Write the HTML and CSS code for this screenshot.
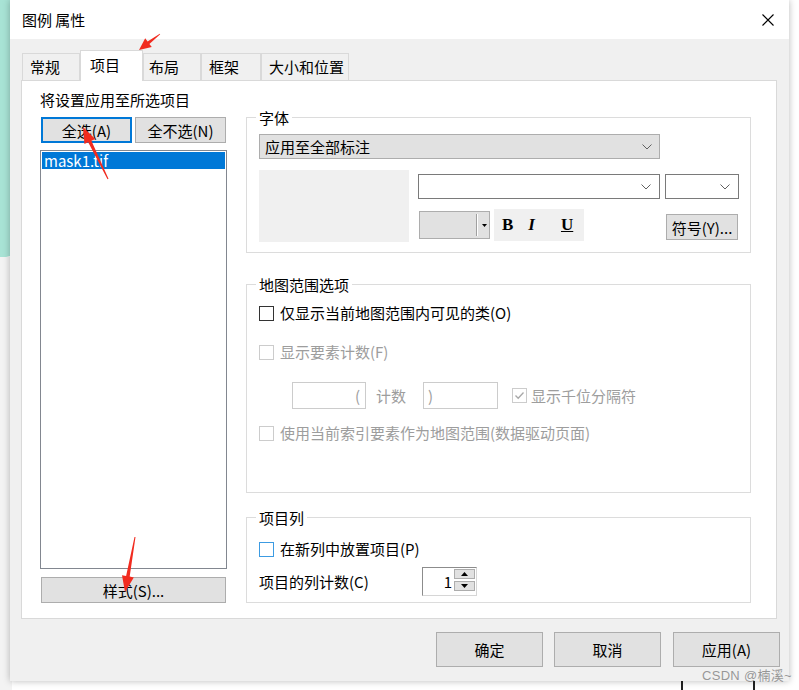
FILE: index.html
```html
<!DOCTYPE html>
<html lang="zh-CN">
<head>
<meta charset="utf-8">
<title>图例 属性</title>
<link rel="stylesheet" href="styles.css">
</head>
<body>
<div class="desk-teal"></div>
<div class="desk-gray"></div>
<div class="desk-line dl1 dl-top"></div>
<div class="desk-line dl2 dl-top"></div>
<div class="desk-line dl1 dl-bot"></div>
<div class="desk-line dl2 dl-bot"></div>

<div class="dialog">
  <div class="titlebar">
    <span class="title">图例 属性</span>
    <svg class="close" viewBox="0 0 12 12"><path d="M0.5 0.5L11.5 11.5M11.5 0.5L0.5 11.5" stroke="#000" stroke-width="1.1" fill="none"/></svg>
  </div>
  <div class="dbody">
    <div class="tabs">
      <div class="tab w58">常规</div>
      <div class="tab sel w63">项目</div>
      <div class="tab w58 p5">布局</div>
      <div class="tab w60">框架</div>
      <div class="tab w88">大小和位置</div>
    </div>
    <div class="panel">
      <div class="leftcol">
        <div class="lbl">将设置应用至所选项目</div>
        <div class="btnrow">
          <button class="btn def">全选(A)</button>
          <button class="btn half">全不选(N)</button>
        </div>
        <div class="list"><div class="item">mask1.tif</div></div>
        <button class="btn style">样式(S)...</button>
      </div>
      <div class="rightcol">
        <div class="group g1">
          <div class="legend">字体</div>
          <div class="dd">
            <span>应用至全部标注</span>
            <svg class="chev" viewBox="0 0 10 6"><polyline points="0.5,0.5 5,5 9.5,0.5" fill="none" stroke="#606060" stroke-width="1"/></svg>
          </div>
          <div class="fontrow">
            <div class="preview"></div>
            <div class="fontctl">
              <div class="ctlrow">
                <div class="combo fontname"><svg class="chev" viewBox="0 0 10 6"><polyline points="0.5,0.5 5,5 9.5,0.5" fill="none" stroke="#606060" stroke-width="1"/></svg></div>
                <div class="combo fontsize"><svg class="chev" viewBox="0 0 10 6"><polyline points="0.5,0.5 5,5 9.5,0.5" fill="none" stroke="#606060" stroke-width="1"/></svg></div>
              </div>
              <div class="ctlrow2">
                <div class="colorbox"><span class="sep"></span><svg class="tri" viewBox="0 0 5 3"><polygon points="0,0 5,0 2.5,3" fill="#000"/></svg></div>
                <div class="biu"><span class="b">B</span><span class="i">I</span><span class="u">U</span></div>
                <button class="btn sym">符号(Y)...</button>
              </div>
            </div>
          </div>
        </div>

        <div class="group g2">
          <div class="legend">地图范围选项</div>
          <div class="row r1"><span class="cb"></span><span class="cbtext">仅显示当前地图范围内可见的类(O)</span></div>
          <div class="row r2 dis"><span class="cb"></span><span class="cbtext">显示要素计数(F)</span></div>
          <div class="row r3 dis">
            <div class="tbox t1">(</div>
            <span class="cnt">计数</span>
            <div class="tbox t2">)</div>
            <span class="cb checked"><svg viewBox="0 0 13 13"><polyline points="2.5,6.5 5.2,9.3 10.5,3.5" fill="none" stroke="#a8a8a8" stroke-width="1.3"/></svg></span>
            <span class="cbtext">显示千位分隔符</span>
          </div>
          <div class="row r4 dis"><span class="cb"></span><span class="cbtext">使用当前索引要素作为地图范围(数据驱动页面)</span></div>
        </div>

        <div class="group g3">
          <div class="legend">项目列</div>
          <div class="row r5"><span class="cb blue"></span><span class="cbtext">在新列中放置项目(P)</span></div>
          <div class="row r6">
            <span class="collbl">项目的列计数(C)</span>
            <div class="spin">
              <div class="spinval">1</div>
              <div class="spinbtns">
                <div class="sbtn"><svg viewBox="0 0 7 4"><polygon points="0,4 7,4 3.5,0" fill="#000"/></svg></div>
                <div class="sbtn"><svg viewBox="0 0 7 4"><polygon points="0,0 7,0 3.5,4" fill="#000"/></svg></div>
              </div>
            </div>
          </div>
        </div>
      </div>
    </div>
    <div class="footer">
      <button class="btn fbtn">确定</button>
      <button class="btn fbtn">取消</button>
      <button class="btn fbtn last">应用(A)</button>
    </div>
  </div>
</div>

<svg class="arrows" viewBox="0 0 799 690">
  <polygon fill="#f12b1f" points="159.8,33.7 147.6,41.5 145.2,38.3 139,50 151.8,47.1 149.4,43.9 160.2,34.3"/>
  <polygon fill="#f12b1f" points="108.5,178.8 91.4,140.7 95.2,138.9 83,127 84.4,144.1 88.2,142.3 107.5,179.2"/>
  <polygon fill="#f12b1f" points="134.5,536.9 126.1,576.0 122.0,575.2 125,592 133.8,577.4 129.7,576.6 135.5,537.1"/>
</svg>
<div class="watermark">CSDN @楠溪~</div>
</body>
</html>
```
FILE: styles.css
```css
* { box-sizing: border-box; }
body {
  margin: 0;
  width: 799px;
  height: 690px;
  overflow: hidden;
  position: relative;
  background: #fff;
  font-family: "Noto Sans CJK SC", "Noto Sans", sans-serif;
  font-size: 15px;
  color: #000;
}
.desk-teal { position: absolute; left: 0; top: 0; width: 16px; height: 257px; background: #a8e3d5; border-bottom-right-radius: 10px; }
.desk-gray { position: absolute; left: 0; top: 257px; bottom: 0; width: 12px; background: #f3f3f3; }
.desk-line { position: absolute; width: 2px; background: #222; }
.dl1 { left: 681px; }
.dl2 { left: 753px; }
.dl-top { top: 0; height: 3px; }
.dl-bot { top: 681px; height: 9px; }

.dialog {
  position: absolute;
  left: 10px; top: 0;
  width: 779px; height: 681px;
  background: #f0f0f0;
  box-shadow: 0 0 7px rgba(0,0,0,0.28);
  display: flex; flex-direction: column;
}
.titlebar {
  height: 39px; flex: none;
  background: #fff;
  display: flex; align-items: center; justify-content: space-between;
  padding: 0 15px 0 12px;
}
.title { line-height: 20px; }
.close { width: 12px; height: 12px; display: block; }

.dbody { flex: 1; padding: 11px 12px 0 11px; display: flex; flex-direction: column; }
.tabs { display: flex; align-items: flex-end; height: 30px; padding-left: 1px; position: relative; z-index: 1; flex: none; }
.tab {
  height: 27px;
  border: 1px solid #d9d9d9; border-bottom: none;
  background: #f0f0f0;
  padding-left: 7px;
  line-height: 25px;
  white-space: nowrap;
}
.tab.sel { height: 31px; margin-bottom: -1px; background: #fff; padding-left: 9px; line-height: 27px; }
.tab.p5 { padding-left: 5px; }
.w58 { width: 58px; } .w60 { width: 60px; } .w63 { width: 63px; } .w88 { width: 88px; }

.panel {
  flex: none;
  height: 539px; width: 756px;
  background: #fff;
  border: 1px solid #d9d9d9;
  display: flex;
  padding: 9px 0 0 18px;
}
.leftcol { flex: 0 0 187px; width: 187px; display: flex; flex-direction: column; }
.lbl { line-height: 20px; height: 20px; white-space: nowrap; }
.btnrow { display: flex; gap: 3px; margin: 7px 0 0 1px; }

.btn {
  font: inherit; color: #000;
  background: #e1e1e1;
  border: 1px solid #adadad;
  padding: 0; margin: 0;
  display: flex; align-items: center; justify-content: center;
  white-space: nowrap;
}
.btn.def { width: 91px; height: 26px; border: 2px solid #0078d7; }
.btn.half { width: 91px; height: 26px; }
.list { margin-top: 7px; height: 419px; width: 187px; border: 1px solid #828790; padding: 1px; }
.item { height: 17px; line-height: 17px; background: #0078d7; color: #fff; padding-left: 2px; }
.btn.style { margin: 8px 0 0 1px; width: 185px; height: 26px; }

.rightcol { flex: 0 0 505px; width: 505px; max-width: 505px; margin-left: 19px; display: flex; flex-direction: column; align-items: stretch; }
.group { width: 505px; border: 1px solid #dcdcdc; padding-left: 12px; display: flex; flex-direction: column; align-items: flex-start; }
.legend { margin: -10px 0 0 -3px; padding: 0 3px; height: 20px; line-height: 20px; background: #fff; width: max-content; }
.g1 { margin-top: 27px; height: 136px; }
.dd {
  margin-top: 6px; width: 401px; height: 25px;
  background: #e1e1e1; border: 1px solid #adadad;
  display: flex; align-items: center; justify-content: space-between;
  padding: 0 7px 0 5px;
}
.chev { width: 10px; height: 6px; display: block; }
.fontrow { display: flex; margin-top: 11px; }
.preview { width: 150px; height: 72px; background: #f0f0f0; }
.fontctl { margin-left: 9px; width: 321px; display: flex; flex-direction: column; }
.ctlrow { display: flex; margin-top: 4px; }
.combo { height: 25px; border: 1px solid #7a7a7a; background: #fff; display: flex; align-items: center; justify-content: flex-end; padding-right: 8px; }
.fontname { width: 242px; }
.fontsize { width: 74px; margin-left: 5px; }
.ctlrow2 { display: flex; margin-top: 10px; align-items: flex-start; }
.colorbox {
  margin: 2px 0 0 1px; width: 71px; height: 28px;
  background: #e1e1e1; border: 1px solid #adadad;
  display: flex; align-items: center; justify-content: flex-end; padding-right: 2px;
}
.sep { width: 1px; height: 22px; background: #a0a0a0; box-shadow: 1px 0 0 #fff; margin-right: 5px; }
.tri { width: 5px; height: 3px; display: block; }
.biu {
  margin-left: 4px; width: 90px; height: 32px; background: #f0f0f0;
  display: flex; align-items: center;
  font-family: "Liberation Serif", serif; font-weight: bold; font-size: 17px;
}
.biu .b { margin-left: 8px; }
.biu .i { margin-left: 15px; font-style: italic; }
.biu .u { margin-left: 26px; text-decoration: underline; text-underline-offset: 1px; }
.btn.sym { margin: 5px 1px 0 auto; width: 72px; height: 26px; }

.g2 { margin-top: 31px; height: 209px; }
.row { display: flex; align-items: center; height: 20px; white-space: nowrap; }
.cb { width: 15px; height: 15px; border: 1px solid #333; background: #fff; flex: none; display: flex; }
.cb svg { width: 13px; height: 13px; display: block; }
.cbtext { margin-left: 6px; line-height: 20px; }
.dis { color: #9d9d9d; }
.dis .cb { border-color: #cccccc; }
.r1 { margin-top: 8px; }
.r2 { margin-top: 19px; }
.r3 { margin-top: 20px; height: 27px; }
.r4 { margin-top: 14px; }
.tbox { width: 74px; height: 27px; border: 1px solid #cccccc; display: flex; align-items: center; line-height: 20px; }
.t1 { margin-left: 33px; justify-content: flex-end; padding-right: 5px; }
.t2 { width: 75px; padding-left: 4px; }
.cnt { margin: 0 17px 0 10px; }
.r3 .cb { margin-left: 14px; }
.r3 .cbtext { margin-left: 4px; }

.g3 { margin-top: 24px; height: 86px; }
.blue { border-color: #3c9be2; }
.r5 { margin-top: 11px; }
.r6 { margin-top: 8px; height: 29px; }
.collbl { width: 163px; }
.spin {
  width: 55px; height: 29px;
  border: 1px solid; border-color: #8c8c8c #d6d6d6 #d6d6d6 #8c8c8c;
  display: flex;
}
.spinval { flex: 1; text-align: right; padding-right: 2px; line-height: 27px; }
.spinbtns { width: 22px; display: flex; flex-direction: column; gap: 2px; padding: 1px 1px 0 0; }
.sbtn { height: 10px; background: #e1e1e1; border: 1px solid #adadad; display: flex; align-items: center; justify-content: center; }
.sbtn svg { width: 7px; height: 4px; display: block; }

.footer { display: flex; justify-content: flex-end; gap: 11px; margin: 13px -3px 0 0; }
.btn.fbtn { width: 107px; height: 35px; }
.btn.last { margin-left: 1px; }

.arrows { position: absolute; left: 0; top: 0; width: 799px; height: 690px; z-index: 10; pointer-events: none; }
.watermark {
  position: absolute; left: 702px; top: 665px; z-index: 10;
  font-family: "Liberation Sans", "Noto Sans CJK SC", sans-serif; font-size: 13px;
  color: rgba(120,120,120,0.75); letter-spacing: 0.3px;
}
```
